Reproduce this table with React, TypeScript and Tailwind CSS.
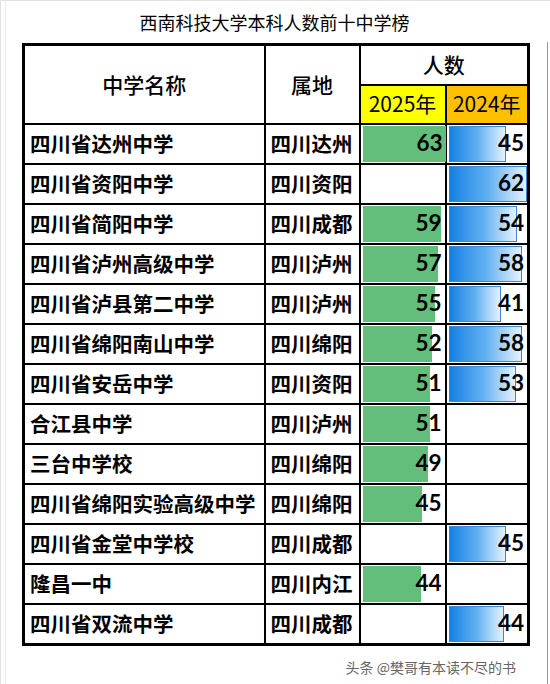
import React from "react";

type Row = { name: string; area: string; y25?: number; y24?: number };

const rows: Row[] = [
  { name: "四川省达州中学", area: "四川达州", y25: 63, y24: 45 },
  { name: "四川省资阳中学", area: "四川资阳", y24: 62 },
  { name: "四川省简阳中学", area: "四川成都", y25: 59, y24: 54 },
  { name: "四川省泸州高级中学", area: "四川泸州", y25: 57, y24: 58 },
  { name: "四川省泸县第二中学", area: "四川泸州", y25: 55, y24: 41 },
  { name: "四川省绵阳南山中学", area: "四川绵阳", y25: 52, y24: 58 },
  { name: "四川省安岳中学", area: "四川资阳", y25: 51, y24: 53 },
  { name: "合江县中学", area: "四川泸州", y25: 51 },
  { name: "三台中学校", area: "四川绵阳", y25: 49 },
  { name: "四川省绵阳实验高级中学", area: "四川绵阳", y25: 45 },
  { name: "四川省金堂中学校", area: "四川成都", y24: 45 },
  { name: "隆昌一中", area: "四川内江", y25: 44 },
  { name: "四川省双流中学", area: "四川成都", y24: 44 },
];

const cjk = { fontFamily: '"Noto Sans CJK SC", "Noto Sans", sans-serif' };
const num = { fontFamily: 'Lato, "Noto Sans", sans-serif' };

// data bar cell: bar and number stacked in one grid area
const BarCell: React.FC<{ value?: number; max: number; full: number; kind: "green" | "blue" }> = ({
  value,
  max,
  full,
  kind,
}) => {
  if (value === undefined) return <div className="h-[38px]" />;
  const barClass =
    kind === "green"
      ? "bg-[#63be7b]"
      : "bg-gradient-to-r from-[#0a80e4] via-[#5fb0f0] to-[#e4f1fd] border border-[#3b87d4]";
  return (
    <div className="grid h-[38px] items-center">
      <div
        className={`col-start-1 row-start-1 ml-[2px] h-[36px] self-center ${barClass}`}
        style={{ width: `${Math.round((value / max) * full)}px` }}
      />
      <div
        className="col-start-1 row-start-1 pr-[3px] text-right text-[22.5px] font-bold text-black leading-none"
        style={num}
      >
        {value}
      </div>
    </div>
  );
};

export default function App() {
  return (
    <div className="flex h-[684px] w-[550px] overflow-hidden border-l border-t border-[#e2e2e2] bg-white">
      <div className="ml-[4px] flex w-[522px] flex-col border-l border-[#ececec] pl-[16px]">
        <div className="flex h-[42px] items-center justify-center text-[18px] text-black" style={cjk}>
          西南科技大学本科人数前十中学榜
        </div>
        <table className="w-[505px] table-fixed border-collapse border-[3px] border-black" style={cjk}>
          <colgroup>
            <col className="w-[241px]" />
            <col className="w-[95px]" />
            <col className="w-[86px]" />
            <col className="w-[83px]" />
          </colgroup>
          <thead>
            <tr className="h-[40px]">
              <th rowSpan={2} className="border-2 border-black text-center text-[21px] font-medium">
                中学名称
              </th>
              <th rowSpan={2} className="border-2 border-black text-center text-[21px] font-medium">
                属地
              </th>
              <th colSpan={2} className="border-2 border-black text-center text-[21px] font-medium">
                人数
              </th>
            </tr>
            <tr className="h-[39px]">
              <th className="border-2 border-black bg-[#ffff00] text-center text-[21px] font-normal">2025年</th>
              <th className="border-2 border-black bg-[#ffc000] text-center text-[21px] font-normal">2024年</th>
            </tr>
          </thead>
          <tbody>
            {rows.map((r) => (
              <tr key={r.name} className="h-[40px]">
                <td className="whitespace-nowrap border-2 border-black pl-[5px] text-[20.5px] font-bold leading-none">
                  {r.name}
                </td>
                <td className="whitespace-nowrap border-2 border-black pl-[5px] text-[20.5px] font-bold leading-none">
                  {r.area}
                </td>
                <td className="border-2 border-black p-0">
                  <BarCell value={r.y25} max={63} full={83} kind="green" />
                </td>
                <td className="border-2 border-black p-0">
                  <BarCell value={r.y24} max={62} full={78} kind="blue" />
                </td>
              </tr>
            ))}
          </tbody>
        </table>
        <div className="mt-[11px] pr-[11px] text-right text-[14px] text-[#666]" style={cjk}>
          头条 @樊哥有本读不尽的书
        </div>
      </div>
      <div className="ml-[20px] mt-[41px] h-[643px] w-px shrink-0 bg-[#9a9a9a]" />
    </div>
  );
}
